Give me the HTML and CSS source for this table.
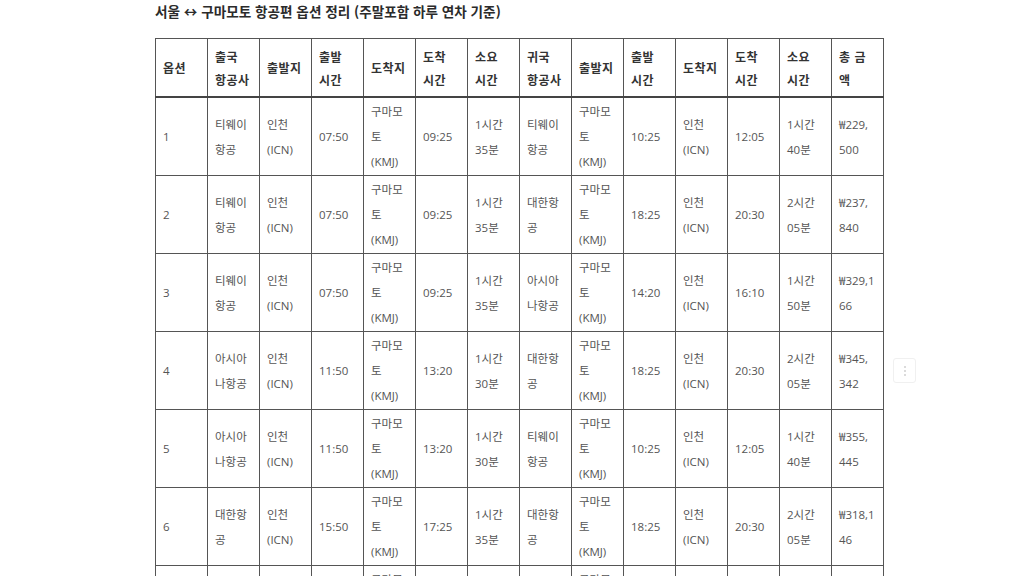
FILE: index.html
```html
<!DOCTYPE html>
<html lang="ko">
<head>
<meta charset="utf-8">
<title>서울 ↔ 구마모토 항공편 옵션 정리</title>
<link rel="stylesheet" href="styles.css">
</head>
<body>
<div class="page">
  <div class="content">
    <h3 class="title">서울 ↔ 구마모토 항공편 옵션 정리 (주말포함 하루 연차 기준)</h3>
    <table class="flights">
      <thead>
        <tr>
          <th>옵션</th><th>출국 항공사</th><th>출발지</th><th>출발 시간</th><th>도착지</th><th>도착 시간</th><th>소요 시간</th>
          <th>귀국 항공사</th><th>출발지</th><th>출발 시간</th><th>도착지</th><th>도착 시간</th><th>소요 시간</th><th>총 금액</th>
        </tr>
      </thead>
      <tbody>
        <tr>
          <td>1</td><td>티웨이항공</td><td>인천 (ICN)</td><td>07:50</td><td>구마모토 (KMJ)</td><td>09:25</td><td>1시간 35분</td>
          <td>티웨이항공</td><td>구마모토 (KMJ)</td><td>10:25</td><td>인천 (ICN)</td><td>12:05</td><td>1시간 40분</td><td class="price">₩229,<wbr>500</td>
        </tr>
        <tr>
          <td>2</td><td>티웨이항공</td><td>인천 (ICN)</td><td>07:50</td><td>구마모토 (KMJ)</td><td>09:25</td><td>1시간 35분</td>
          <td>대한항공</td><td>구마모토 (KMJ)</td><td>18:25</td><td>인천 (ICN)</td><td>20:30</td><td>2시간 05분</td><td class="price">₩237,<wbr>840</td>
        </tr>
        <tr>
          <td>3</td><td>티웨이항공</td><td>인천 (ICN)</td><td>07:50</td><td>구마모토 (KMJ)</td><td>09:25</td><td>1시간 35분</td>
          <td>아시아나항공</td><td>구마모토 (KMJ)</td><td>14:20</td><td>인천 (ICN)</td><td>16:10</td><td>1시간 50분</td><td class="price">₩329,1<wbr>66</td>
        </tr>
        <tr>
          <td>4</td><td>아시아나항공</td><td>인천 (ICN)</td><td>11:50</td><td>구마모토 (KMJ)</td><td>13:20</td><td>1시간 30분</td>
          <td>대한항공</td><td>구마모토 (KMJ)</td><td>18:25</td><td>인천 (ICN)</td><td>20:30</td><td>2시간 05분</td><td class="price">₩345,<wbr>342</td>
        </tr>
        <tr>
          <td>5</td><td>아시아나항공</td><td>인천 (ICN)</td><td>11:50</td><td>구마모토 (KMJ)</td><td>13:20</td><td>1시간 30분</td>
          <td>티웨이항공</td><td>구마모토 (KMJ)</td><td>10:25</td><td>인천 (ICN)</td><td>12:05</td><td>1시간 40분</td><td class="price">₩355,<wbr>445</td>
        </tr>
        <tr>
          <td>6</td><td>대한항공</td><td>인천 (ICN)</td><td>15:50</td><td>구마모토 (KMJ)</td><td>17:25</td><td>1시간 35분</td>
          <td>대한항공</td><td>구마모토 (KMJ)</td><td>18:25</td><td>인천 (ICN)</td><td>20:30</td><td>2시간 05분</td><td class="price">₩318,1<wbr>46</td>
        </tr>
        <tr>
          <td>7</td><td>대한항공</td><td>인천 (ICN)</td><td>15:50</td><td>구마모토 (KMJ)</td><td>17:25</td><td>1시간 35분</td>
          <td>티웨이항공</td><td>구마모토 (KMJ)</td><td>10:25</td><td>인천 (ICN)</td><td>12:05</td><td>1시간 40분</td><td class="price">₩327,<wbr>200</td>
        </tr>
      </tbody>
    </table>
  </div>
  <div class="side">
    <button class="more" type="button" aria-label="더보기">
      <span class="dot"></span><span class="dot"></span><span class="dot"></span>
    </button>
  </div>
</div>
</body>
</html>
```

FILE: styles.css
```css
html, body {
  margin: 0;
  padding: 0;
  background: #ffffff;
}

body {
  font-family: "Open Sans", "Noto Sans CJK KR", sans-serif;
  color: #555555;
  overflow: hidden;
  height: 576px;
}

.page {
  display: flex;
  align-items: flex-start;
  padding-left: 155px;
}

.content {
  width: 729px;
}

.title {
  margin: 0;
  padding-top: 2px;
  height: 38px;
  box-sizing: border-box;
  font-family: "Noto Sans CJK KR", sans-serif;
  font-size: 13.6px;
  line-height: 18px;
  font-weight: 700;
  color: #2b2b2b;
  white-space: nowrap;
}

.flights {
  width: 729px;
  table-layout: fixed;
  border-collapse: collapse;
}

.flights th,
.flights td {
  border: 1px solid #555555;
  text-align: left;
  vertical-align: middle;
  padding: 0 6px 0 7px;
  overflow-wrap: anywhere;
}

.flights th {
  font-family: "Noto Sans CJK KR", sans-serif;
  font-size: 12px;
  font-weight: 700;
  letter-spacing: 0.5px;
  color: #333333;
  line-height: 23px;
  height: 57px;
}

.flights thead tr {
  border-bottom: 2px solid #444444;
}

.flights td {
  font-size: 11.5px;
  line-height: 25px;
  height: 77px;
  color: #555555;
}

.flights td.price {
  overflow-wrap: normal;
  word-break: normal;
}

.side {
  padding-left: 9px;
  padding-top: 358px;
}

.more {
  width: 23px;
  height: 25px;
  border: 1px solid #f0f0f0;
  border-radius: 3px;
  background: #ffffff;
  padding: 0;
  display: flex;
  flex-direction: column;
  align-items: center;
  justify-content: center;
  gap: 2px;
}

.dot {
  width: 2px;
  height: 2px;
  border-radius: 50%;
  background: #cfcfcf;
}
```
